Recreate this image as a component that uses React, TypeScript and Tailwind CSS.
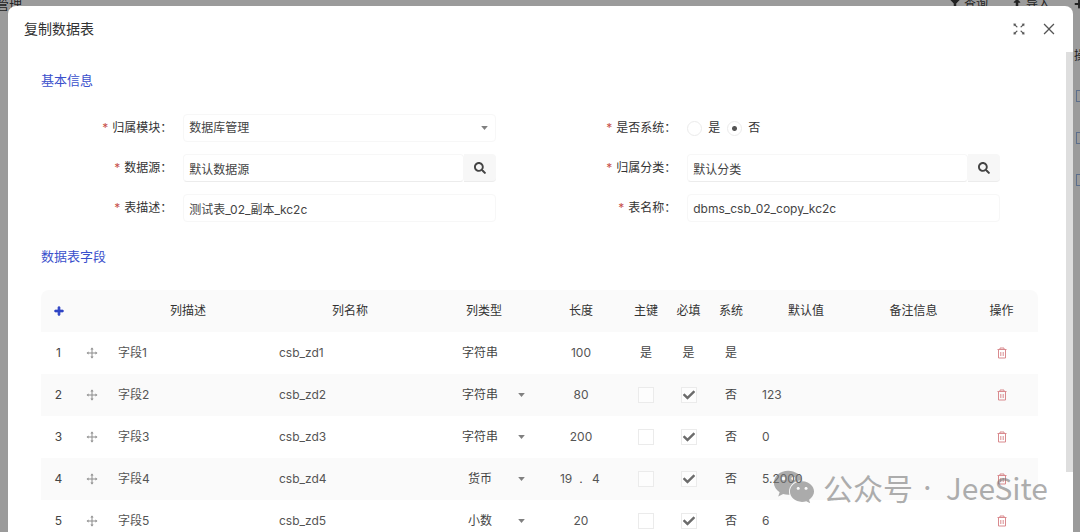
import type { ReactNode } from 'react';
import { AiOutlineClose, AiOutlineDrag, AiOutlineFullscreen } from 'react-icons/ai';
import { FaCheck, FaFilter, FaPlus, FaSearch, FaUpload, FaWeixin } from 'react-icons/fa';

type FieldRow = {
  id: number;
  label: string;
  name: string;
  type: string;
  length: string;
  scale?: string;
  locked?: boolean;
  defaultValue: string;
};

const fields: FieldRow[] = [
  { id: 1, label: '字段1', name: 'csb_zd1', type: '字符串', length: '100', locked: true, defaultValue: '' },
  { id: 2, label: '字段2', name: 'csb_zd2', type: '字符串', length: '80', defaultValue: '123' },
  { id: 3, label: '字段3', name: 'csb_zd3', type: '字符串', length: '200', defaultValue: '0' },
  { id: 4, label: '字段4', name: 'csb_zd4', type: '货币', length: '19', scale: '4', defaultValue: '5.2000' },
  { id: 5, label: '字段5', name: 'csb_zd5', type: '小数', length: '20', defaultValue: '6' },
];

const types = ['字符串', '货币', '小数'];

const inputClass = 'h-7 w-full min-w-0 rounded-sm border border-[#f7f7f7] bg-white px-[5px] text-[#444] outline-none';
const cellInputClass = 'w-full min-w-0 bg-transparent text-[#555] outline-none';

function Caret() {
  return (
    <svg viewBox="0 0 8 6" className="pointer-events-none absolute top-1/2 right-2 h-[5px] w-[7px] -translate-y-1/2 fill-[#808080]">
      <path d="M0 0.5h8L4 5.5z" />
    </svg>
  );
}

function TrashIcon() {
  return (
    <svg viewBox="0 0 12 12" className="size-3 fill-none stroke-[#d98a8e]" strokeWidth="1">
      <path d="M1.500 2.500h9M4 2.500v-1.500h4v1.500M2.500 2.500v8.500h7v-8.500M4.800 5v4M7.200 5v4" />
    </svg>
  );
}

function FormItem({ id, label, children }: { id?: string; label: string; children: ReactNode }) {
  return (
    <div className="flex h-7 items-center">
      <label htmlFor={id} className="w-[30%] shrink-0 pr-[11px] text-right text-[#333]">
        <span className="mr-1 text-[#c8504b]">*</span>
        {label}：
      </label>
      <div className="w-[62%]">{children}</div>
    </div>
  );
}

function SearchInput({ id, value }: { id: string; value: string }) {
  return (
    <div className="flex">
      <input id={id} defaultValue={value} className={`${inputClass} border-b-[#ececec]`} />
      <button
        type="button"
        aria-label="选择"
        className="flex h-7 w-8 shrink-0 items-center justify-center rounded-r border-b border-[#ececec] bg-[#f7f7f7] text-[#444]"
      >
        <FaSearch className="size-3" />
      </button>
    </div>
  );
}

function CheckCell({ label, checked }: { label: string; checked: boolean }) {
  return (
    <span className="relative mx-auto block size-4">
      <input
        type="checkbox"
        aria-label={label}
        defaultChecked={checked}
        className="block size-4 appearance-none border border-[#ebebeb] bg-white/60"
      />
      {checked && <FaCheck className="pointer-events-none absolute top-0.5 left-0.5 size-3 text-[#6c6c6c]" />}
    </span>
  );
}

function FieldTable() {
  return (
    <table className="mt-6 ml-[9px] w-[calc(100%-11px)] table-fixed overflow-hidden rounded-lg text-center text-[#444]">
      <colgroup>
        <col className="w-[35px]" />
        <col className="w-[31px]" />
        <col className="w-[162px]" />
        <col className="w-[162px]" />
        <col className="w-[106px]" />
        <col className="w-[88px]" />
        <col className="w-[42px]" />
        <col className="w-[43px]" />
        <col className="w-[42px]" />
        <col className="w-[108px]" />
        <col className="w-[107px]" />
        <col className="w-[71px]" />
      </colgroup>
      <thead className="bg-[#fafafa] text-[#333]">
        <tr className="h-[42px]">
          <th>
            <button type="button" aria-label="新增" className="block w-full text-[#2f45c5]">
              <FaPlus className="mx-auto size-2.5 stroke-current stroke-[40px]" />
            </button>
          </th>
          <th />
          <th className="font-normal">列描述</th>
          <th className="font-normal">列名称</th>
          <th className="font-normal">列类型</th>
          <th className="font-normal">长度</th>
          <th className="font-normal">主键</th>
          <th className="font-normal">必填</th>
          <th className="font-normal">系统</th>
          <th className="font-normal">默认值</th>
          <th className="font-normal">备注信息</th>
          <th className="pr-0.5 font-normal">操作</th>
        </tr>
      </thead>
      <tbody>
        {fields.map((field) => (
          <tr key={field.id} className="h-[42px] even:bg-[#fafafa]">
            <td>{field.id}</td>
            <td>
              <AiOutlineDrag className="mx-auto size-3.5 text-[#8c8c8c]" />
            </td>
            <td className="px-[11px]">
              <input aria-label="列描述" defaultValue={field.label} className={cellInputClass} />
            </td>
            <td className="px-2.5">
              <input aria-label="列名称" defaultValue={field.name} className={cellInputClass} />
            </td>
            <td className="pr-1">
              {field.locked ? (
                <span className="pr-1">{field.type}</span>
              ) : (
                <div className="relative">
                  <select
                    aria-label="列类型"
                    defaultValue={field.type}
                    className="w-full appearance-none bg-transparent pr-1 [text-align-last:center] outline-none"
                  >
                    {types.map((type) => (
                      <option key={type}>{type}</option>
                    ))}
                  </select>
                  <Caret />
                </div>
              )}
            </td>
            <td className="px-4">
              {field.scale ? (
                <div className="flex items-center">
                  <input aria-label="长度" defaultValue={field.length} className={`${cellInputClass} text-center`} />
                  <span>.</span>
                  <input aria-label="小数位" defaultValue={field.scale} className={`${cellInputClass} text-center`} />
                </div>
              ) : (
                <input aria-label="长度" defaultValue={field.length} className={`${cellInputClass} text-center`} />
              )}
            </td>
            <td>{field.locked ? '是' : <CheckCell label="主键" checked={false} />}</td>
            <td>{field.locked ? '是' : <CheckCell label="必填" checked />}</td>
            <td>{field.locked ? '是' : '否'}</td>
            <td className="px-2.5">
              <input aria-label="默认值" defaultValue={field.defaultValue} className={cellInputClass} />
            </td>
            <td className="px-2.5">
              <input aria-label="备注信息" className={cellInputClass} />
            </td>
            <td className="pr-0.5">
              <button type="button" aria-label="删除" className="mx-auto block">
                <TrashIcon />
              </button>
            </td>
          </tr>
        ))}
      </tbody>
    </table>
  );
}

function PageBehind() {
  return (
    <div className="text-[13px] text-[#222]">
      <div className="flex h-2 items-center">
        <span className="-ml-1 leading-none">管理</span>
        <div className="-mr-1 ml-auto flex items-center text-xs leading-none">
          <FaFilter className="mr-1 size-2.5" />
          查询
          <FaUpload className="mr-1 ml-6 size-2.5" />
          导入
          <FaPlus className="ml-6 size-2.5" />
        </div>
      </div>
      <div className="-mr-1.5 flex flex-col items-end gap-[30px] pt-10">
        <span className="-mb-1 text-xs">操</span>
        <span className="h-3 w-2.5 border border-[#5d6f8c]" />
        <span className="h-3 w-2.5 border border-[#5d6f8c]" />
        <span className="h-3 w-2.5 border border-[#5d6f8c]" />
      </div>
    </div>
  );
}

export default function App() {
  return (
    <div
      lang="zh-CN"
      className="relative h-screen overflow-hidden bg-[#9b9b9b] font-[Inter,'Noto_Sans_CJK_SC',sans-serif] text-xs"
    >
      <PageBehind />
      <div className="absolute inset-0 flex pt-1.5 pr-[7px] pl-2">
        <div role="dialog" aria-labelledby="dialog-title" className="flex min-w-0 flex-1 flex-col rounded-t-lg bg-white">
          <header className="flex h-[46px] shrink-0 items-center pr-4 pl-4 text-[#555]">
            <h1 id="dialog-title" className="mr-auto text-sm text-[#333]">
              复制数据表
            </h1>
            <button type="button" aria-label="全屏">
              <AiOutlineFullscreen className="size-4" />
            </button>
            <button type="button" aria-label="关闭" className="ml-3.5">
              <AiOutlineClose className="size-4" />
            </button>
          </header>
          <div className="flex min-h-0 flex-1">
            <div className="min-w-0 flex-1 overflow-hidden pt-[18px] pr-[26px] pl-6">
              <h2 className="pl-[9px] text-[13px] leading-5 text-[#3a50cc]">基本信息</h2>
              <form className="mt-6 grid grid-cols-2 gap-y-3">
                <FormItem id="module" label="归属模块">
                  <div className="relative">
                    <select id="module" className={`${inputClass} appearance-none`}>
                      <option>数据库管理</option>
                    </select>
                    <Caret />
                  </div>
                </FormItem>
                <FormItem label="是否系统">
                  <div className="flex items-center gap-[7px] text-[#333]">
                    {['是', '否'].map((option) => (
                      <label key={option} className="flex items-center gap-1.5">
                        <input
                          type="radio"
                          name="isSystem"
                          defaultChecked={option === '否'}
                          className="size-[15px] appearance-none rounded-full border border-[#ebebeb] checked:bg-[radial-gradient(circle,#555_2px,#fff_3px)]"
                        />
                        {option}
                      </label>
                    ))}
                  </div>
                </FormItem>
                <FormItem id="source" label="数据源">
                  <SearchInput id="source" value="默认数据源" />
                </FormItem>
                <FormItem id="category" label="归属分类">
                  <SearchInput id="category" value="默认分类" />
                </FormItem>
                <FormItem id="comment" label="表描述">
                  <input id="comment" defaultValue="测试表_02_副本_kc2c" className={inputClass} />
                </FormItem>
                <FormItem id="tableName" label="表名称">
                  <input id="tableName" defaultValue="dbms_csb_02_copy_kc2c" className={inputClass} />
                </FormItem>
              </form>
              <h2 className="mt-6 pl-[9px] text-[13px] leading-5 text-[#3a50cc]">数据表字段</h2>
              <FieldTable />
            </div>
            <div className="h-[87.5%] w-[7px] shrink-0 bg-[#dedede]" />
          </div>
        </div>
      </div>
      <div className="pointer-events-none absolute right-8 bottom-6 flex items-center gap-2 font-['Noto_Sans_CJK_SC',sans-serif] text-[30px] leading-10 text-[#777]/60">
        <FaWeixin className="size-[42px]" />
        <span className="flex gap-3.5">
          <span>公众号</span>
          <span className="-ml-1 font-[Inter]">·</span>
          <span>JeeSite</span>
        </span>
      </div>
    </div>
  );
}
